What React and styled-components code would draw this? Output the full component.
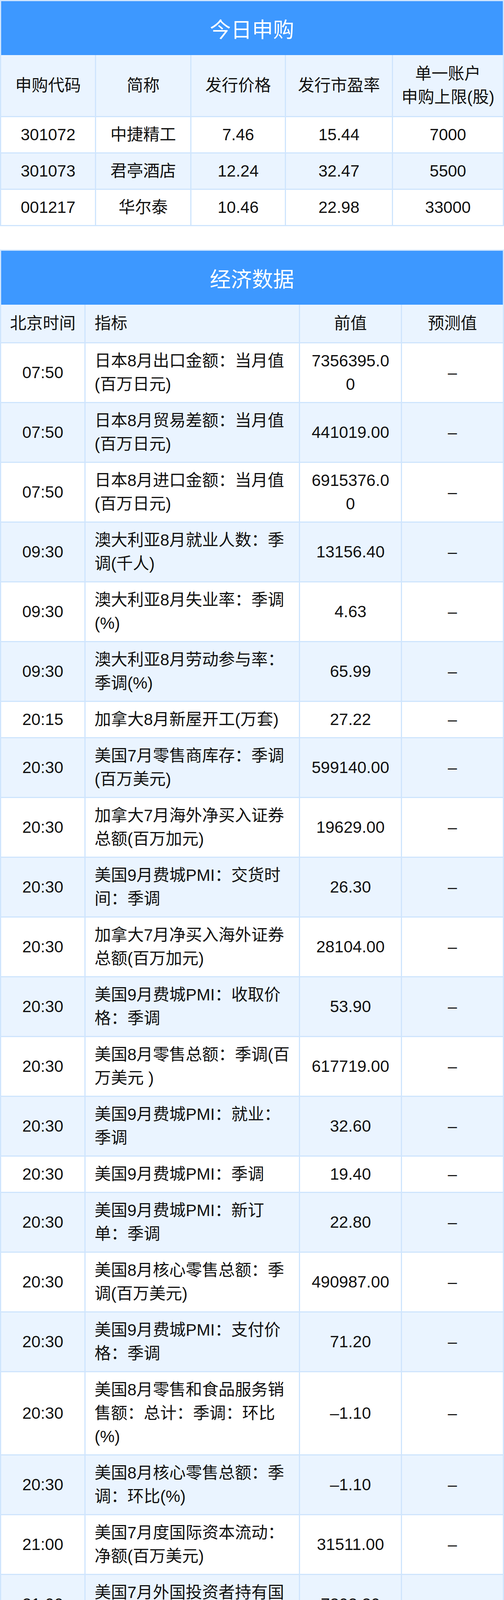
import React from "react";
import styled, { createGlobalStyle } from "styled-components";

const GlobalStyle = createGlobalStyle`
  html, body {
    margin: 0;
    padding: 0;
    background: #ffffff;
  }
  body {
    font-family: "Liberation Sans", "Noto Sans CJK SC", sans-serif;
    color: #111111;
    -webkit-font-smoothing: antialiased;
  }
`;

const Page = styled.main`
  width: 1290px;
  display: flex;
  flex-direction: column;
  gap: 60px;
`;

const Panel = styled.section`
  background: #cfe5fd;
  padding: 3px;
`;

const Banner = styled.h2`
  margin: 0;
  height: 138px;
  display: flex;
  align-items: center;
  justify-content: center;
  background: #3d98ff;
  color: #ffffff;
  font-size: 54px;
  font-weight: 400;
  letter-spacing: 0;
`;

const Grid = styled.div`
  display: grid;
  grid-template-columns: ${(p) => p.$cols};
  gap: 3px;
`;

const Cell = styled.div`
  background: ${(p) => (p.$alt ? "#eaf4ff" : "#ffffff")};
  display: flex;
  align-items: center;
  justify-content: ${(p) => (p.$left ? "flex-start" : "center")};
  text-align: ${(p) => (p.$left ? "left" : "center")};
  padding: ${(p) => p.$pad || "15px 0"};
  font-size: 42px;
  line-height: 60px;
  word-break: ${(p) => (p.$breakAll ? "break-all" : "normal")};
`;

const Inner = styled.span`
  display: block;
  width: 100%;
`;

const ipoHeaders = ["申购代码", "简称", "发行价格", "发行市盈率", null];
const ipoRows = [
  ["301072", "中捷精工", "7.46", "15.44", "7000"],
  ["301073", "君亭酒店", "12.24", "32.47", "5500"],
  ["001217", "华尔泰", "10.46", "22.98", "33000"],
];

const econRows = [
  ["07:50", "日本8月出口金额：当月值(百万日元)", "7356395.00"],
  ["07:50", "日本8月贸易差额：当月值(百万日元)", "441019.00"],
  ["07:50", "日本8月进口金额：当月值(百万日元)", "6915376.00"],
  ["09:30", "澳大利亚8月就业人数：季调(千人)", "13156.40"],
  ["09:30", "澳大利亚8月失业率：季调(%)", "4.63"],
  ["09:30", "澳大利亚8月劳动参与率：季调(%)", "65.99"],
  ["20:15", "加拿大8月新屋开工(万套)", "27.22"],
  ["20:30", "美国7月零售商库存：季调(百万美元)", "599140.00"],
  ["20:30", "加拿大7月海外净买入证券总额(百万加元)", "19629.00"],
  ["20:30", "美国9月费城PMI：交货时间：季调", "26.30"],
  ["20:30", "加拿大7月净买入海外证券总额(百万加元)", "28104.00"],
  ["20:30", "美国9月费城PMI：收取价格：季调", "53.90"],
  ["20:30", "美国8月零售总额：季调(百万美元 )", "617719.00"],
  ["20:30", "美国9月费城PMI：就业：季调", "32.60"],
  ["20:30", "美国9月费城PMI：季调", "19.40"],
  ["20:30", "美国9月费城PMI：新订单：季调", "22.80"],
  ["20:30", "美国8月核心零售总额：季调(百万美元)", "490987.00"],
  ["20:30", "美国9月费城PMI：支付价格：季调", "71.20"],
  ["20:30", "美国8月零售和食品服务销售额：总计：季调：环比(%)", "–1.10"],
  ["20:30", "美国8月核心零售总额：季调：环比(%)", "–1.10"],
  ["21:00", "美国7月度国际资本流动：净额(百万美元)", "31511.00"],
  ["21:00", "美国7月外国投资者持有国债(十亿美元)", "7202.20"],
  ["21:00", "美国7月海外投资者净买入长期证券(百万美元)", "75846.00"],
  ["00:00", "中国澳门8月旅客入境数(人)", "789407.00"],
  ["00:00", "中国香港8月失业率：季调(%)", "5.00"],
];

function IpoTable() {
  return (
    <Panel>
      <Banner>今日申购</Banner>
      <Grid $cols="240px 241px 239px 271px 281px">
        {ipoHeaders.map((h, i) => (
          <Cell key={"h" + i} $alt $pad="18px 0">
            <Inner>
              {h === null ? (
                <>
                  单一账户
                  <br />
                  申购上限(股)
                </>
              ) : (
                h
              )}
            </Inner>
          </Cell>
        ))}
        {ipoRows.map((row, r) =>
          row.map((v, c) => (
            <Cell key={r + "-" + c} $alt={r % 2 === 1}>
              <Inner>{v}</Inner>
            </Cell>
          ))
        )}
      </Grid>
    </Panel>
  );
}

function EconTable() {
  return (
    <Panel>
      <Banner>经济数据</Banner>
      <Grid $cols="213px 546px 258px 258px">
        <Cell $alt $pad="18px 0">
          <Inner>北京时间</Inner>
        </Cell>
        <Cell $alt $left $pad="18px 18px 18px 23px">
          <Inner>指标</Inner>
        </Cell>
        <Cell $alt $pad="18px 0">
          <Inner>前值</Inner>
        </Cell>
        <Cell $alt $pad="18px 0">
          <Inner>预测值</Inner>
        </Cell>
        {econRows.map(([time, name, prev], r) => {
          const alt = r % 2 === 1;
          return (
            <React.Fragment key={r}>
              <Cell $alt={alt}>
                <Inner>{time}</Inner>
              </Cell>
              <Cell $alt={alt} $left $pad="15px 18px 15px 23px">
                <Inner>{name}</Inner>
              </Cell>
              <Cell $alt={alt} $pad="15px 24px" $breakAll>
                <Inner>{prev}</Inner>
              </Cell>
              <Cell $alt={alt}>
                <Inner>–</Inner>
              </Cell>
            </React.Fragment>
          );
        })}
      </Grid>
    </Panel>
  );
}

export default function App() {
  return (
    <>
      <GlobalStyle />
      <Page>
        <IpoTable />
        <EconTable />
      </Page>
    </>
  );
}
